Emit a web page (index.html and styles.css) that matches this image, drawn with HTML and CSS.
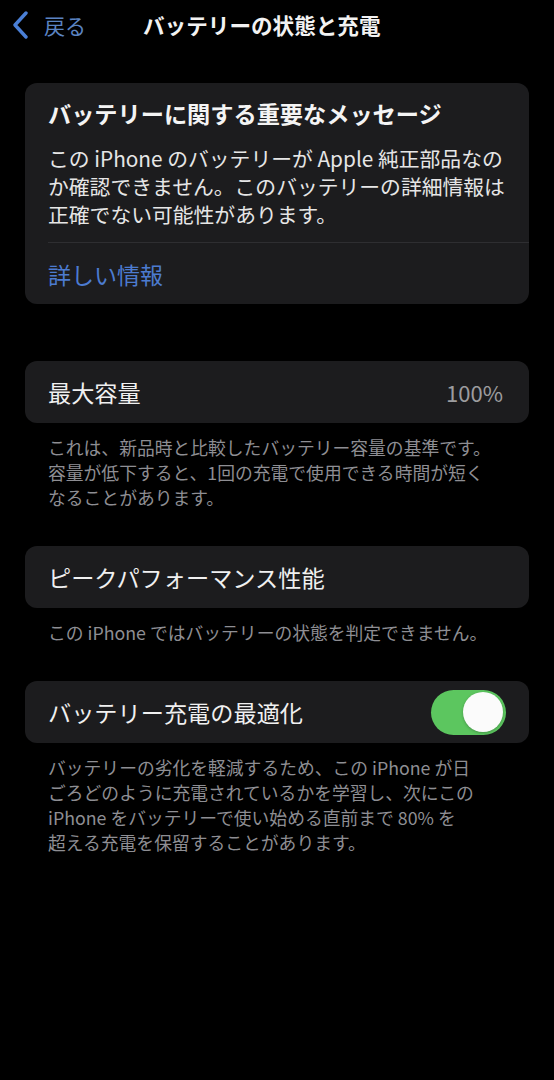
FILE: index.html
```html
<!DOCTYPE html>
<html lang="ja">
<head>
<meta charset="utf-8">
<title>バッテリーの状態と充電</title>
<link rel="stylesheet" href="styles.css">
</head>
<body>
<header class="nav">
  <div class="back">
    <svg class="chev" width="16" height="28" viewBox="0 0 16 28"><polyline points="13,2 2,14 13,26" fill="none" stroke="#4a7fd6" stroke-width="3.4" stroke-linecap="round" stroke-linejoin="round"/></svg>
    <span class="back-label">戻る</span>
  </div>
  <h1 class="nav-title">バッテリーの状態と充電</h1>
</header>

<main class="content">
  <section class="card notice">
    <h2 class="notice-title">バッテリーに関する重要なメッセージ</h2>
    <p class="notice-body">この iPhone のバッテリーが Apple 純正部品なの<br>か確認できません。このバッテリーの詳細情報は<br>正確でない可能性があります。</p>
    <div class="notice-link">詳しい情報</div>
  </section>

  <section class="group">
    <div class="card row">
      <span class="row-label">最大容量</span>
      <span class="row-value">100%</span>
    </div>
    <p class="footnote">これは、新品時と比較したバッテリー容量の基準です。<br>容量が低下すると、1回の充電で使用できる時間が短く<br>なることがあります。</p>
  </section>

  <section class="group">
    <div class="card row">
      <span class="row-label">ピークパフォーマンス性能</span>
    </div>
    <p class="footnote">この iPhone ではバッテリーの状態を判定できません。</p>
  </section>

  <section class="group">
    <div class="card row">
      <span class="row-label">バッテリー充電の最適化</span>
      <span class="toggle"><span class="knob"></span></span>
    </div>
    <p class="footnote">バッテリーの劣化を軽減するため、この iPhone が日<br>ごろどのように充電されているかを学習し、次にこの<br>iPhone をバッテリーで使い始める直前まで 80% を<br>超える充電を保留することがあります。</p>
  </section>
</main>
</body>
</html>
```

FILE: styles.css
```css
* { box-sizing: border-box; }
html, body {
  margin: 0;
  padding: 0;
  background: #000;
}
body {
  width: 554px;
  min-height: 1080px;
  font-family: "Noto Sans CJK JP", "Noto Sans", sans-serif;
  color: #ececec;
}
.nav {
  height: 50px;
  display: flex;
  align-items: center;
  padding-left: 13px;
}
.back {
  display: flex;
  align-items: center;
  gap: 15px;
}
.chev { display: block; }
.back-label {
  font-size: 21px;
  color: #5b84c2;
  line-height: 1;
}
.nav-title {
  margin: 0 0 0 57px;
  font-size: 21.6px;
  font-weight: 700;
  color: #f2f2f2;
  line-height: 1;
}
.content {
  padding: 33px 25px 0;
}
.card {
  background: #1c1c1e;
  border-radius: 12px;
}
.notice {
  padding: 15px 0 0 23px;
  margin-bottom: 57px;
}
.notice-title {
  margin: 0;
  font-size: 23.2px;
  font-weight: 700;
  line-height: 30px;
  color: #f4f4f4;
}
.notice-body {
  margin: 16px 0 0;
  padding-right: 10px;
  font-size: 20.8px;
  line-height: 28px;
  color: #e6e6e6;
  padding-bottom: 14px;
  border-bottom: 1px solid #2e2e31;
  white-space: nowrap;
}
.notice-link {
  height: 61px;
  display: flex;
  align-items: center;
  font-size: 23px;
  color: #4c7bd0;
}
.group {
  margin-bottom: 36px;
}
.row {
  height: 62px;
  display: flex;
  align-items: center;
  justify-content: space-between;
  padding: 0 23px 0 23px;
}
.row-label {
  font-size: 23.2px;
  font-weight: 400;
  color: #f0f0f0;
}
.row-value {
  font-size: 22px;
  color: #9c9c9f;
  margin-right: 3px;
}
.toggle {
  width: 75px;
  height: 45px;
  border-radius: 23px;
  background: #5cc65f;
  display: flex;
  align-items: center;
  justify-content: flex-end;
  padding-right: 3px;
}
.knob {
  width: 40px;
  height: 40px;
  border-radius: 50%;
  background: #fbfbfb;
  box-shadow: 0 1px 3px rgba(0,0,0,0.25);
}
.footnote {
  margin: 0;
  padding: 12px 0 0 23px;
  font-size: 17.8px;
  line-height: 25px;
  color: #8e8e93;
  white-space: nowrap;
}
```
